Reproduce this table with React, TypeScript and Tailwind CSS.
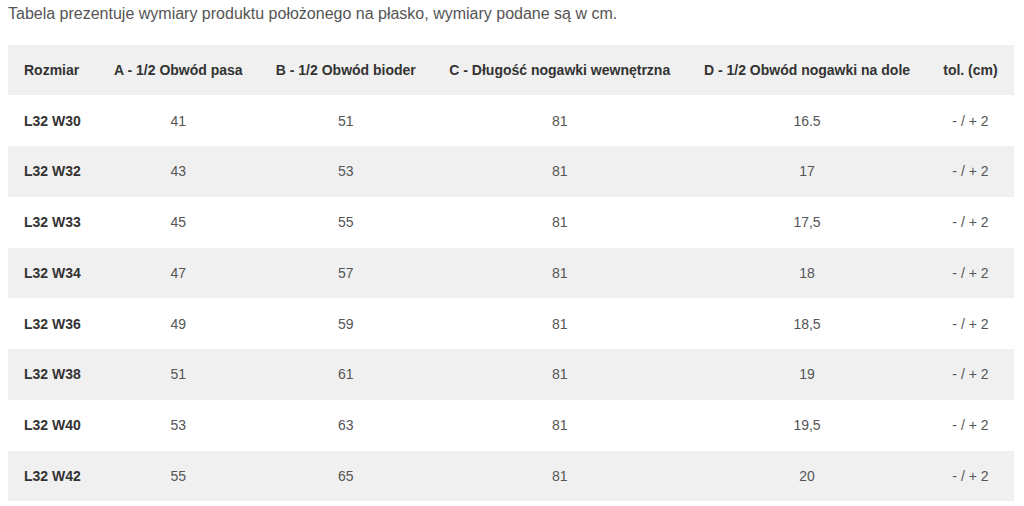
const rows = [
  ["L32 W30", "41", "51", "81", "16.5", "- / + 2"],
  ["L32 W32", "43", "53", "81", "17", "- / + 2"],
  ["L32 W33", "45", "55", "81", "17,5", "- / + 2"],
  ["L32 W34", "47", "57", "81", "18", "- / + 2"],
  ["L32 W36", "49", "59", "81", "18,5", "- / + 2"],
  ["L32 W38", "51", "61", "81", "19", "- / + 2"],
  ["L32 W40", "53", "63", "81", "19,5", "- / + 2"],
  ["L32 W42", "55", "65", "81", "20", "- / + 2"],
];

const headers = [
  "A - 1/2 Obwód pasa",
  "B - 1/2 Obwód bioder",
  "C - Długość nogawki wewnętrzna",
  "D - 1/2 Obwód nogawki na dole",
  "tol. (cm)",
];

export default function App() {
  return (
    <div className="bg-white min-h-screen px-2 pt-[5px] font-['Liberation_Sans',Arial,sans-serif]">
      <p className="text-[16px] leading-[18px] text-[#555]">
        Tabela prezentuje wymiary produktu położonego na płasko, wymiary podane są w cm.
      </p>
      <table className="mt-[21.5px] w-[1006px] border-collapse text-[14px] leading-[16px]">
        <thead>
          <tr className="h-[50.75px] bg-[#f0f0f0]">
            <th className="px-4 text-left font-bold text-[#333]">Rozmiar</th>
            {headers.map((h) => (
              <th key={h} className="px-4 text-center font-bold text-[#333] whitespace-nowrap">
                {h}
              </th>
            ))}
          </tr>
        </thead>
        <tbody>
          {rows.map((r, i) => (
            <tr key={r[0]} className={`h-[50.75px] ${i % 2 === 1 ? "bg-[#f0f0f0]" : "bg-white"}`}>
              <td className="px-4 text-left font-bold text-[#333]">{r[0]}</td>
              {r.slice(1).map((v, j) => (
                <td key={j} className="px-4 text-center text-[#555] whitespace-nowrap">
                  {v}
                </td>
              ))}
            </tr>
          ))}
        </tbody>
      </table>
    </div>
  );
}
